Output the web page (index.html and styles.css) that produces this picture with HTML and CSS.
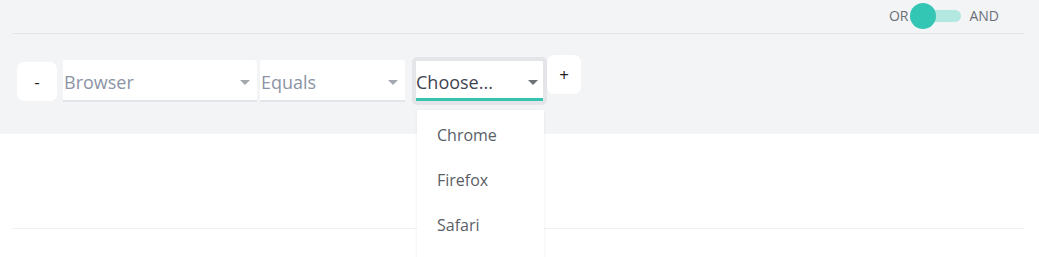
FILE: index.html
```html
<!DOCTYPE html>
<html lang="en">

<head>
    <meta charset="UTF-8">
    <meta name="viewport" content="width=device-width, initial-scale=1.0">
    <title>Filter Builder</title>
    <link rel="stylesheet" href="styles.css">
</head>

<body>

    <div class="panel">
        <div class="topbar">
            <span class="lbl or">OR</span>
            <span class="toggle"><span class="knob"></span></span>
            <span class="lbl">AND</span>
        </div>
        <div class="rule">
            <button class="btn minus">-</button>
            <div class="sel field">
                <span class="ph">Browser</span>
                <i class="caret"></i>
            </div>
            <div class="sel op">
                <span class="ph">Equals</span>
                <i class="caret"></i>
            </div>
            <div class="focus">
                <div class="sel val">
                    <span class="cur">Choose...</span>
                    <i class="caret dark"></i>
                </div>
                <ul class="menu">
                    <li>Chrome</li>
                    <li>Firefox</li>
                    <li>Safari</li>
                </ul>
            </div>
            <button class="btn plus">+</button>
        </div>
    </div>
    <div class="below">
        <div class="line"></div>
    </div>

</body>

</html>
```

FILE: styles.css
```css
* {
    margin: 0;
    padding: 0;
    box-sizing: border-box;
    font-family: 'Open Sans', sans-serif;
}

html,
body {
    background-color: #FFFFFF;
    height: 257px;
    overflow: hidden;
}

.panel {
    background-color: #F3F4F6;
    height: 134px;
    padding: 0 15px 0 13px;
}

.topbar {
    height: 34px;
    border-bottom: 1px solid #E3E5E8;
    display: flex;
    align-items: center;
    justify-content: flex-end;
    padding-right: 25px;
    padding-bottom: 2px;
}

.lbl {
    font-size: 14px;
    color: #6B6F78;
}

.or {
    margin-right: 3px;
}

.toggle {
    width: 50px;
    height: 12px;
    background-color: #B3E8E1;
    border-radius: 6px;
    position: relative;
    margin: 0 8px 0 0;
}

.knob {
    position: absolute;
    left: -1px;
    top: -7px;
    width: 26px;
    height: 26px;
    border-radius: 50%;
    background-color: #34C6B4;
}

.rule {
    display: flex;
    align-items: flex-start;
    padding: 21px 0 0 4px;
}

.btn {
    border: none;
    background-color: #FFFFFF;
    border-radius: 7px;
    color: #222;
    font-size: 17px;
    width: 40px;
    height: 39px;
    cursor: pointer;
}

.minus {
    margin-top: 7px;
    margin-right: 6px;
}

.plus {
    width: 34px;
    margin-top: 0;
}

.sel {
    background-color: #FFFFFF;
    border-bottom: 2px solid #E3E5E8;
    height: 42px;
    margin-top: 5px;
    display: flex;
    align-items: center;
    justify-content: space-between;
    padding: 4px 7px 0 1px;
    border-radius: 0 3px 0 0;
}

.field {
    width: 194px;
    margin-right: 3px;
}

.op {
    width: 145px;
    margin-right: 7px;
}

.ph {
    font-size: 18px;
    color: #8B94A5;
}

.cur {
    font-size: 18px;
    color: #3F4452;
}

.caret {
    width: 0;
    height: 0;
    border-left: 5px solid transparent;
    border-right: 5px solid transparent;
    border-top: 5px solid #A3A7AE;
}

.caret.dark {
    border-top-color: #6E7178;
}

.focus {
    position: relative;
    width: 135px;
    margin-top: 2px;
}

.focus .val {
    margin: 0;
    width: 135px;
    height: 48px;
    border: 4px solid #E3E5E8;
    border-radius: 5px;
    background-clip: padding-box;
    position: relative;
    padding: 2px 5px 0 0;
}

.focus .val::after {
    content: "";
    position: absolute;
    left: 0;
    right: 0;
    bottom: 0;
    height: 3px;
    background-color: #35C3B0;
}

.menu {
    position: absolute;
    left: 5px;
    top: 53px;
    width: 127px;
    height: 152px;
    background-color: #FFFFFF;
    list-style: none;
    box-shadow: 0 1px 4px rgba(0, 0, 0, 0.06);
    padding-top: 12px;
    z-index: 2;
}

.menu li {
    font-size: 16px;
    color: #5A5E66;
    height: 45px;
    line-height: 27px;
    padding-left: 20px;
}

.below {
    padding: 94px 15px 0 13px;
}

.line {
    border-top: 1px solid #EEF0F2;
}
```
